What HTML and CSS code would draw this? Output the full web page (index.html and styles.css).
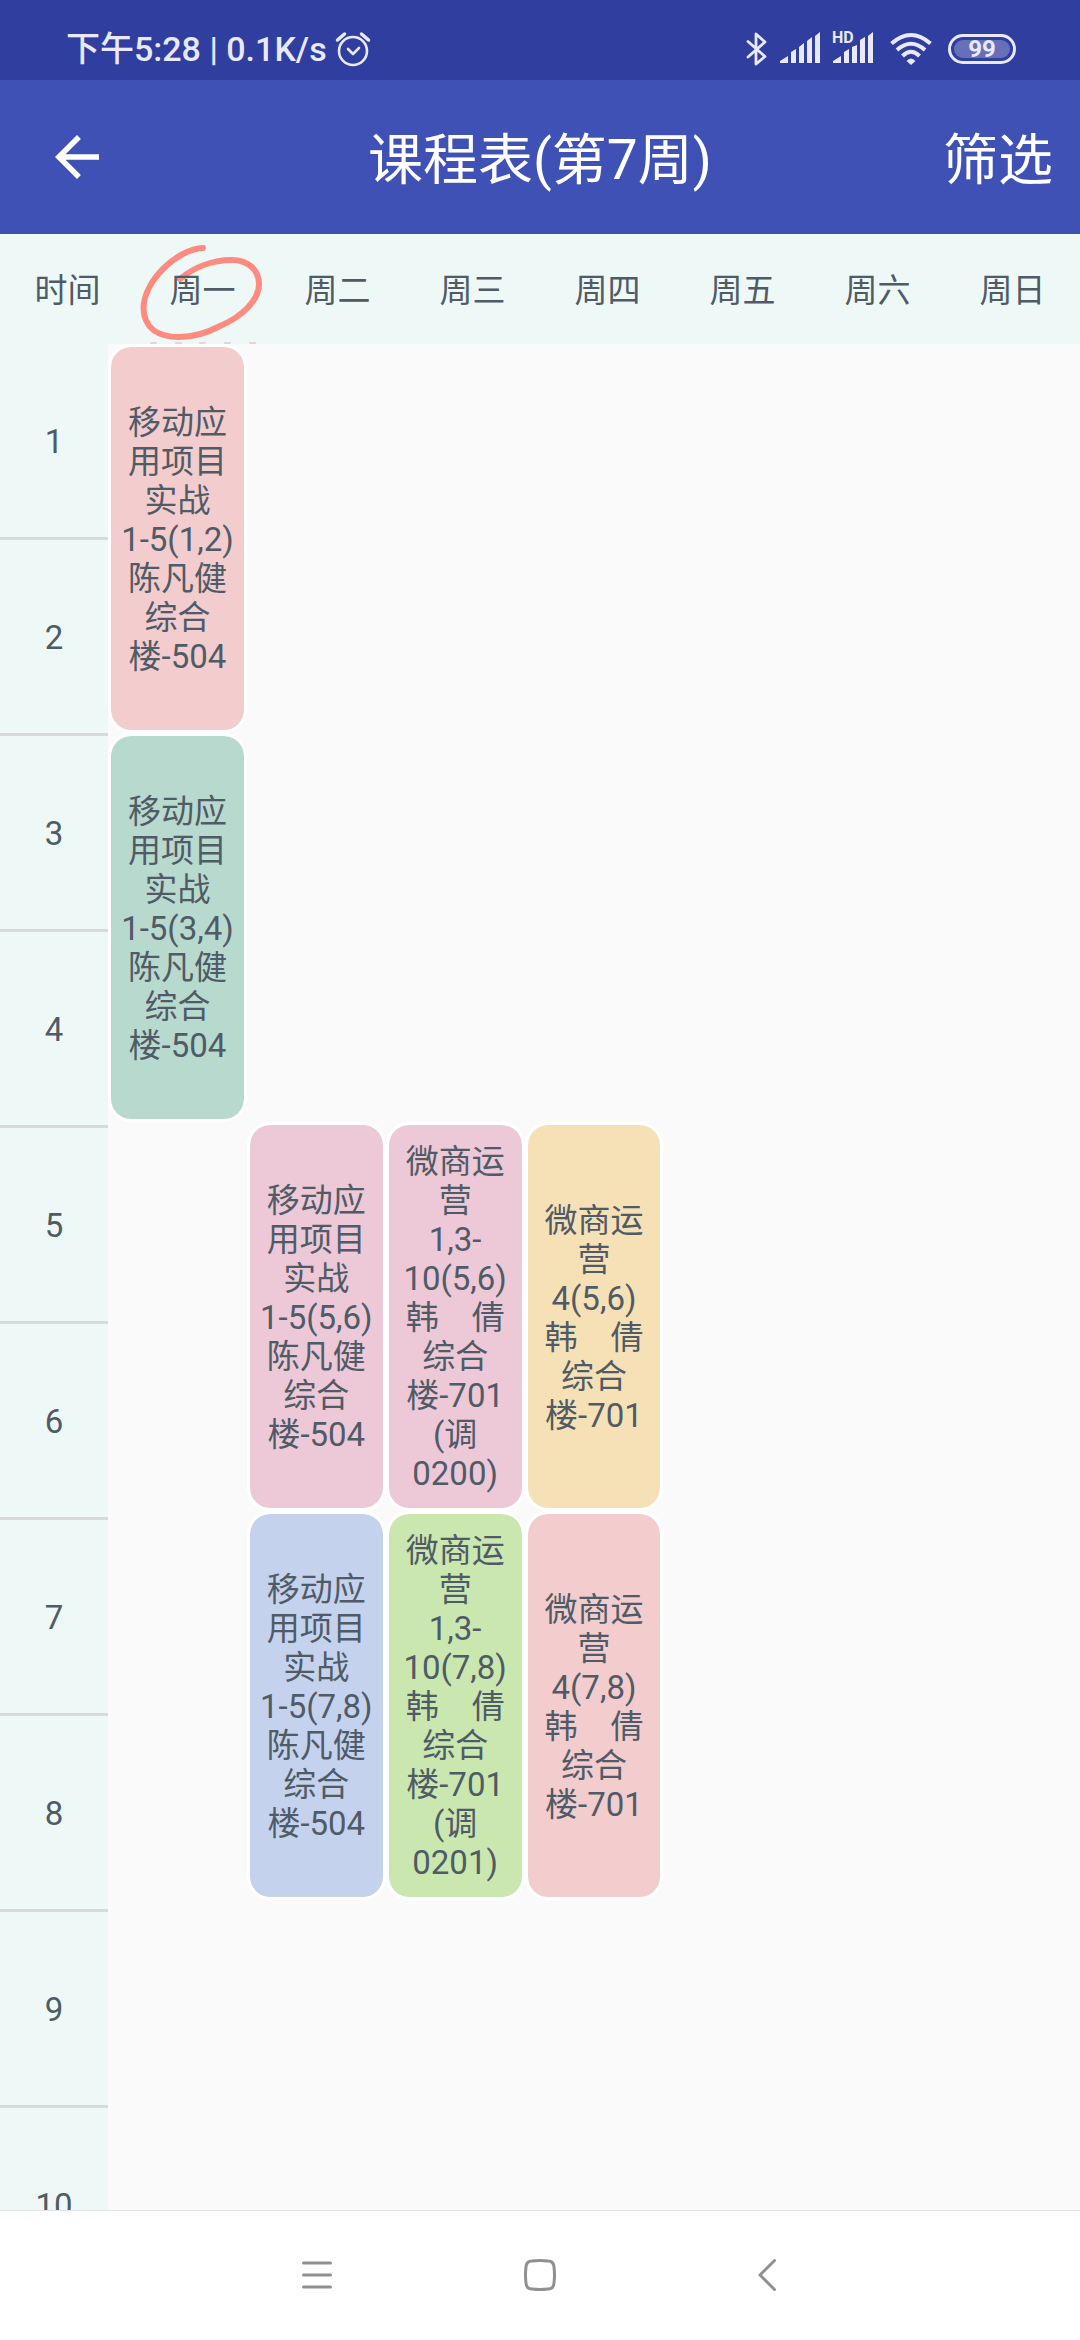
FILE: index.html
```html
<!DOCTYPE html>
<html lang="zh-CN">
<head>
<meta charset="utf-8">
<meta name="viewport" content="width=device-width, initial-scale=1">
<title>课程表</title>
<link rel="stylesheet" href="styles.css">
</head>
<body>
<div class="status-bar">
  <div class="status-left">
    <span>下午5:28 | 0.1K/s</span>
    <svg class="icon" width="36" height="36" viewBox="0 0 36 36" fill="none" stroke="currentColor" stroke-width="2.600" stroke-linecap="round" stroke-linejoin="round">
      <circle cx="18" cy="20" r="14"/>
      <path d="M2.500 9L9.500 3M33.500 9L26.500 3" stroke-width="3.500"/>
      <path d="M13 18l5 5 6-6"/>
    </svg>
  </div>
  <div class="status-right">
    <svg class="icon" width="22" height="36" viewBox="0 0 22 36" fill="none" stroke="currentColor" stroke-width="2.800" stroke-linejoin="round" stroke-linecap="round">
      <path d="M2 10.500L19 25.500L10 33V3L19 11L2 26"/>
    </svg>
    <svg class="icon" width="40" height="36" viewBox="0 0 40 36" fill="currentColor">
      <path d="M0 32v-2l8-5v7zM11 21l5-3v14h-5zM19 16l5-4v20h-5zM27 10l5-4v26h-5zM35 5l5-4v31h-5z"/>
    </svg>
    <svg class="icon" width="42" height="36" viewBox="0 0 42 36" fill="currentColor">
      <text class="hd" x="0" y="12">HD</text>
      <path d="M1 32v-2l8-5v7zM12 21l5-3v14h-5zM20 16l5-2v18h-5zM28 9l5-3v26h-5zM36 5l5-4v31h-5z"/>
    </svg>
    <svg class="icon wifi" width="42" height="36" viewBox="0 0 42 36" fill="none" stroke="currentColor" stroke-width="4">
      <path d="M1.500 12.500Q21-4.500 40.500 12.500M7 19Q21 6.500 35 19M12.500 25Q21 16.500 29.500 25"/>
      <path d="M21 34l-4.500-4Q21 25 25.500 30z" fill="currentColor" stroke="none"/>
    </svg>
    <div class="battery"><span class="level">99</span></div>
  </div>
</div>

<header class="app-bar">
  <button class="back" type="button" aria-label="返回">
    <svg class="icon" width="66" height="66" viewBox="0 0 24 24" fill="currentColor"><path d="M20 11H7.830l5.590-5.590L12 4l-8 8 8 8 1.410-1.410L7.830 13H20v-2z"/></svg>
  </button>
  <h1 class="title">课程表(第7周)</h1>
  <button class="filter" type="button">筛选</button>
</header>

<div class="week">
  <div class="day">时间</div>
  <div class="day marked">周一
    <svg class="mark" width="144" height="116" viewBox="0 0 144 116" fill="none" stroke="#ff8a80" stroke-width="6" stroke-linecap="round" stroke-linejoin="round">
      <path d="M73 12C47 13 14 45 13.500 72C14 93 29 101 49 101C64 101 77 97 90 90C111 81 129 65 129 48C129 33 117 24 102 24C83 24 64 31 50 43"/>
      <path class="dots" d="M21 107h5M46 107h5M70 107h5M95 107h5M120 107h5" stroke="#e3d5d4" stroke-width="2"/>
    </svg>
  </div>
  <div class="day">周二</div>
  <div class="day">周三</div>
  <div class="day">周四</div>
  <div class="day">周五</div>
  <div class="day">周六</div>
  <div class="day">周日</div>
</div>

<main class="timetable">
  <div class="periods">
    <div class="period">1</div>
    <div class="period">2</div>
    <div class="period">3</div>
    <div class="period">4</div>
    <div class="period">5</div>
    <div class="period">6</div>
    <div class="period">7</div>
    <div class="period">8</div>
    <div class="period">9</div>
    <div class="period">10</div>
  </div>
  <div class="courses">
    <div class="course mon first rose">移动应<br>用项目<br>实战<br>1-5(1,2)<br>陈凡健<br>综合<br>楼-504</div>
    <div class="course mon second mint">移动应<br>用项目<br>实战<br>1-5(3,4)<br>陈凡健<br>综合<br>楼-504</div>
    <div class="course tue third pink">移动应<br>用项目<br>实战<br>1-5(5,6)<br>陈凡健<br>综合<br>楼-504</div>
    <div class="course wed third pink">微商运<br>营<br>1,3-<br>10(5,6)<br>韩　倩<br>综合<br>楼-701<br>(调<br>0200)</div>
    <div class="course thu third sand">微商运<br>营<br>4(5,6)<br>韩　倩<br>综合<br>楼-701</div>
    <div class="course tue fourth blue">移动应<br>用项目<br>实战<br>1-5(7,8)<br>陈凡健<br>综合<br>楼-504</div>
    <div class="course wed fourth green">微商运<br>营<br>1,3-<br>10(7,8)<br>韩　倩<br>综合<br>楼-701<br>(调<br>0201)</div>
    <div class="course thu fourth rose">微商运<br>营<br>4(7,8)<br>韩　倩<br>综合<br>楼-701</div>
  </div>
</main>

<nav class="nav-bar">
  <button type="button" aria-label="菜单">
    <svg class="icon" width="40" height="40" viewBox="0 0 40 40" fill="none" stroke="currentColor" stroke-width="3" stroke-linecap="round"><path d="M8.500 8H35.500M8.500 20H35.500M8.500 32H35.500"/></svg>
  </button>
  <button type="button" aria-label="主页">
    <svg class="icon" width="40" height="40" viewBox="0 0 40 40" fill="none" stroke="currentColor" stroke-width="3"><path d="M12 6Q20 5 28 6Q33.500 6 34 12Q35 20 34 28Q33.500 34 28 34Q20 35 12 34Q6.500 34 6 28Q5 20 6 12Q6.500 6 12 6z"/></svg>
  </button>
  <button type="button" aria-label="返回">
    <svg class="icon" width="40" height="40" viewBox="0 0 40 40" fill="none" stroke="currentColor" stroke-width="3" stroke-linecap="round" stroke-linejoin="round"><path d="M29.500 5.500L15 20L29.500 34.500"/></svg>
  </button>
</nav>
</body>
</html>
```
FILE: styles.css
```css
* {
  box-sizing: border-box;
}

body {
  margin: 0;
  height: 100vh;
  display: flex;
  flex-direction: column;
  background: #fafafa;
  color: #4f5b66;
  font-family: Roboto, "Noto Sans CJK SC", sans-serif;
  font-size: 33px;
  line-height: 39px;
}

button {
  margin: 0;
  padding: 0;
  border: 0;
  background: none;
  color: inherit;
  font: inherit;
}

.icon {
  display: block;
  flex: none;
  overflow: visible;
}

.status-bar {
  flex: none;
  height: 80px;
  padding: 18px 64px 0 66px;
  display: flex;
  justify-content: space-between;
  align-items: center;
  background: #303f9f;
  color: #e8e9fa;
  font-size: 34px;
  font-weight: 500;
}

.status-left,
.status-right {
  display: flex;
  align-items: center;
}

.status-left {
  gap: 8px;
}

.status-right {
  gap: 12px;
}

.wifi {
  margin: 0 4px;
}

.hd {
  font-size: 16px;
  font-weight: 700;
}

.battery {
  width: 68px;
  height: 30px;
  padding: 3px;
  border: 3px solid #e8e9fa;
  border-radius: 15px;
}

.level {
  display: block;
  height: 18px;
  border-radius: 9px;
  background: #6670b9;
  text-align: center;
  font-size: 24px;
  line-height: 18px;
  font-weight: 700;
}

.app-bar {
  flex: none;
  height: 154px;
  padding: 0 27px;
  display: grid;
  grid-template-columns: 1fr auto 1fr;
  align-items: center;
  background: #3f51b5;
  color: #fff;
  font-size: 55px;
  line-height: 64px;
}

.back {
  justify-self: start;
  margin-left: 17px;
}

.title {
  margin: 0;
  padding-top: 5px;
  font: inherit;
}

.filter {
  justify-self: end;
  padding-top: 5px;
}

.week {
  flex: none;
  height: 110px;
  padding-top: 2px;
  display: grid;
  grid-template-columns: repeat(8, 1fr);
  align-items: center;
  isolation: isolate;
  background: #eef9f7;
  text-align: center;
}

.marked {
  position: relative;
}

/* Hand-drawn ring, kept behind the day name */
.mark {
  position: absolute;
  left: -5px;
  top: -35px;
  z-index: -1;
}

.timetable {
  flex: 1;
  min-height: 0;
  overflow-y: auto;
  scrollbar-width: none;
  display: grid;
  grid-template-columns: 1fr 9fr;
  align-items: start;
}

.period {
  height: 196px;
  padding-top: 2px;
  display: flex;
  align-items: center;
  justify-content: center;
  border-bottom: 3px solid #d9d9d9;
  background: #eef9f7;
}

.courses {
  display: grid;
  grid-template-columns: repeat(7, 1fr);
  grid-auto-rows: 389px;
}

.course {
  padding-top: 2px;
  display: flex;
  align-items: center;
  justify-content: center;
  border: 3px solid #fff;
  border-radius: 23px;
  background-clip: padding-box;
  text-align: center;
  white-space: nowrap;
}

.mon { grid-column: 1; }
.tue { grid-column: 2; }
.wed { grid-column: 3; }
.thu { grid-column: 4; }

.first { grid-row: 1; }
.second { grid-row: 2; }
.third { grid-row: 3; }
.fourth { grid-row: 4; }

.rose { background-color: #f3cccd; }
.mint { background-color: #b8d9cd; }
.pink { background-color: #edc8d7; }
.sand { background-color: #f6e1b7; }
.blue { background-color: #c5d2ed; }
.green { background-color: #cae7b0; }

.nav-bar {
  flex: none;
  height: 130px;
  padding-bottom: 2px;
  display: flex;
  align-items: center;
  justify-content: center;
  gap: 185px;
  border-top: 1px solid #e4e4e4;
  background: #fff;
  color: #909090;
}
```
